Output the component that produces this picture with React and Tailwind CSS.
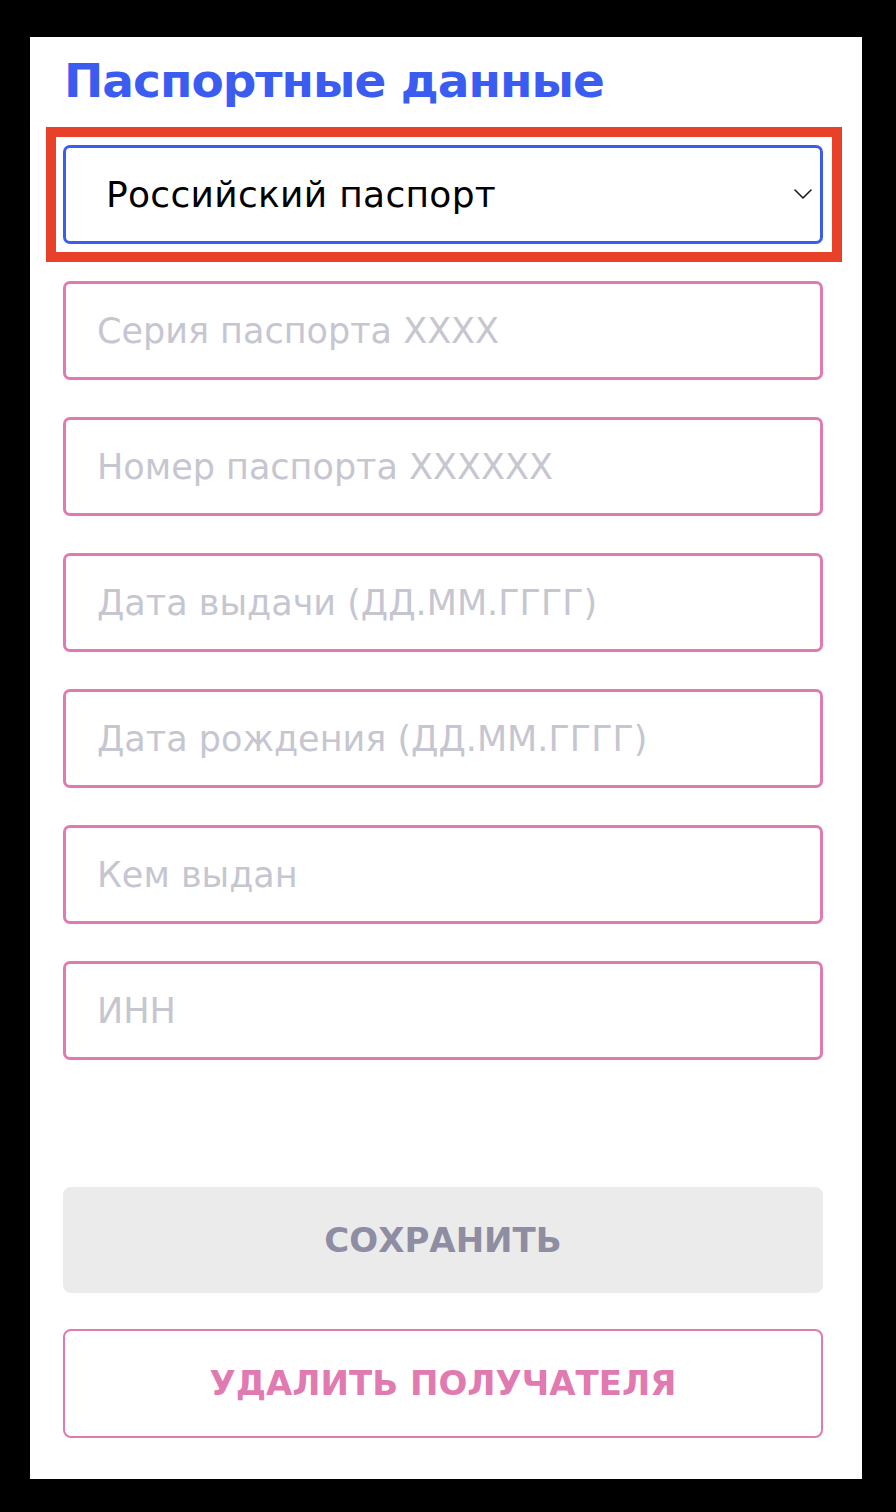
const fields = [
  'Серия паспорта XXXX',
  'Номер паспорта XXXXXX',
  'Дата выдачи (ДД.ММ.ГГГГ)',
  'Дата рождения (ДД.ММ.ГГГГ)',
  'Кем выдан',
  'ИНН',
];

const font = { fontFamily: '"DejaVu Sans", "Open Sans", sans-serif' };

export default function App() {
  return (
    <div className="w-[896px] h-[1512px] bg-black pt-[37px] pl-[30px] pr-[34px] pb-[33px]" style={font}>
      <div className="bg-white h-full flex flex-col">
        <h1 className="mt-[20px] pl-[34px] text-[47px] leading-[48px] font-bold text-[#3b5cf0] tracking-[-1px]">
          Паспортные данные
        </h1>

        {/* selected document type */}
        <div className="mt-[22px] ml-[16px] mr-[20px] border-[10px] border-[#e8412a] pt-[8px] pb-[8px] pl-[7px] pr-[9px]">
          <div className="h-[99px] border-[3px] border-[#3b5cf0] rounded-[7px] flex items-center justify-between pl-[40px] pr-[8px]">
            <span className="text-[36px] text-black tracking-[0.3px]">Российский паспорт</span>
            <svg width="18" height="10" viewBox="0 0 18 10" fill="none" className="mt-[-2px]">
              <path d="M1 1l8 8 8-8" stroke="#1a1a1a" strokeWidth="1.6" strokeLinecap="round" strokeLinejoin="round" />
            </svg>
          </div>
        </div>

        <div className="mt-[19px] pl-[33px] pr-[39px] flex flex-col gap-[37px]">
          {fields.map((f) => (
            <input
              key={f}
              placeholder={f}
              className="h-[99px] w-full border-[3px] border-[#e07ab0] rounded-[7px] pl-[31px] text-[35px] outline-none placeholder:text-[#c6c6d1]"
            />
          ))}
        </div>

        <div className="mt-[127px] pl-[33px] pr-[39px] flex flex-col gap-[36px]">
          <button className="h-[106px] w-full rounded-[8px] bg-[#ebebeb] text-[34px] font-bold text-[#8e8da2]">
            СОХРАНИТЬ
          </button>
          <button className="h-[109px] w-full rounded-[8px] border-2 border-[#e07ab0] bg-white text-[34px] font-bold text-[#e07ab0]">
            УДАЛИТЬ ПОЛУЧАТЕЛЯ
          </button>
        </div>
      </div>
    </div>
  );
}
